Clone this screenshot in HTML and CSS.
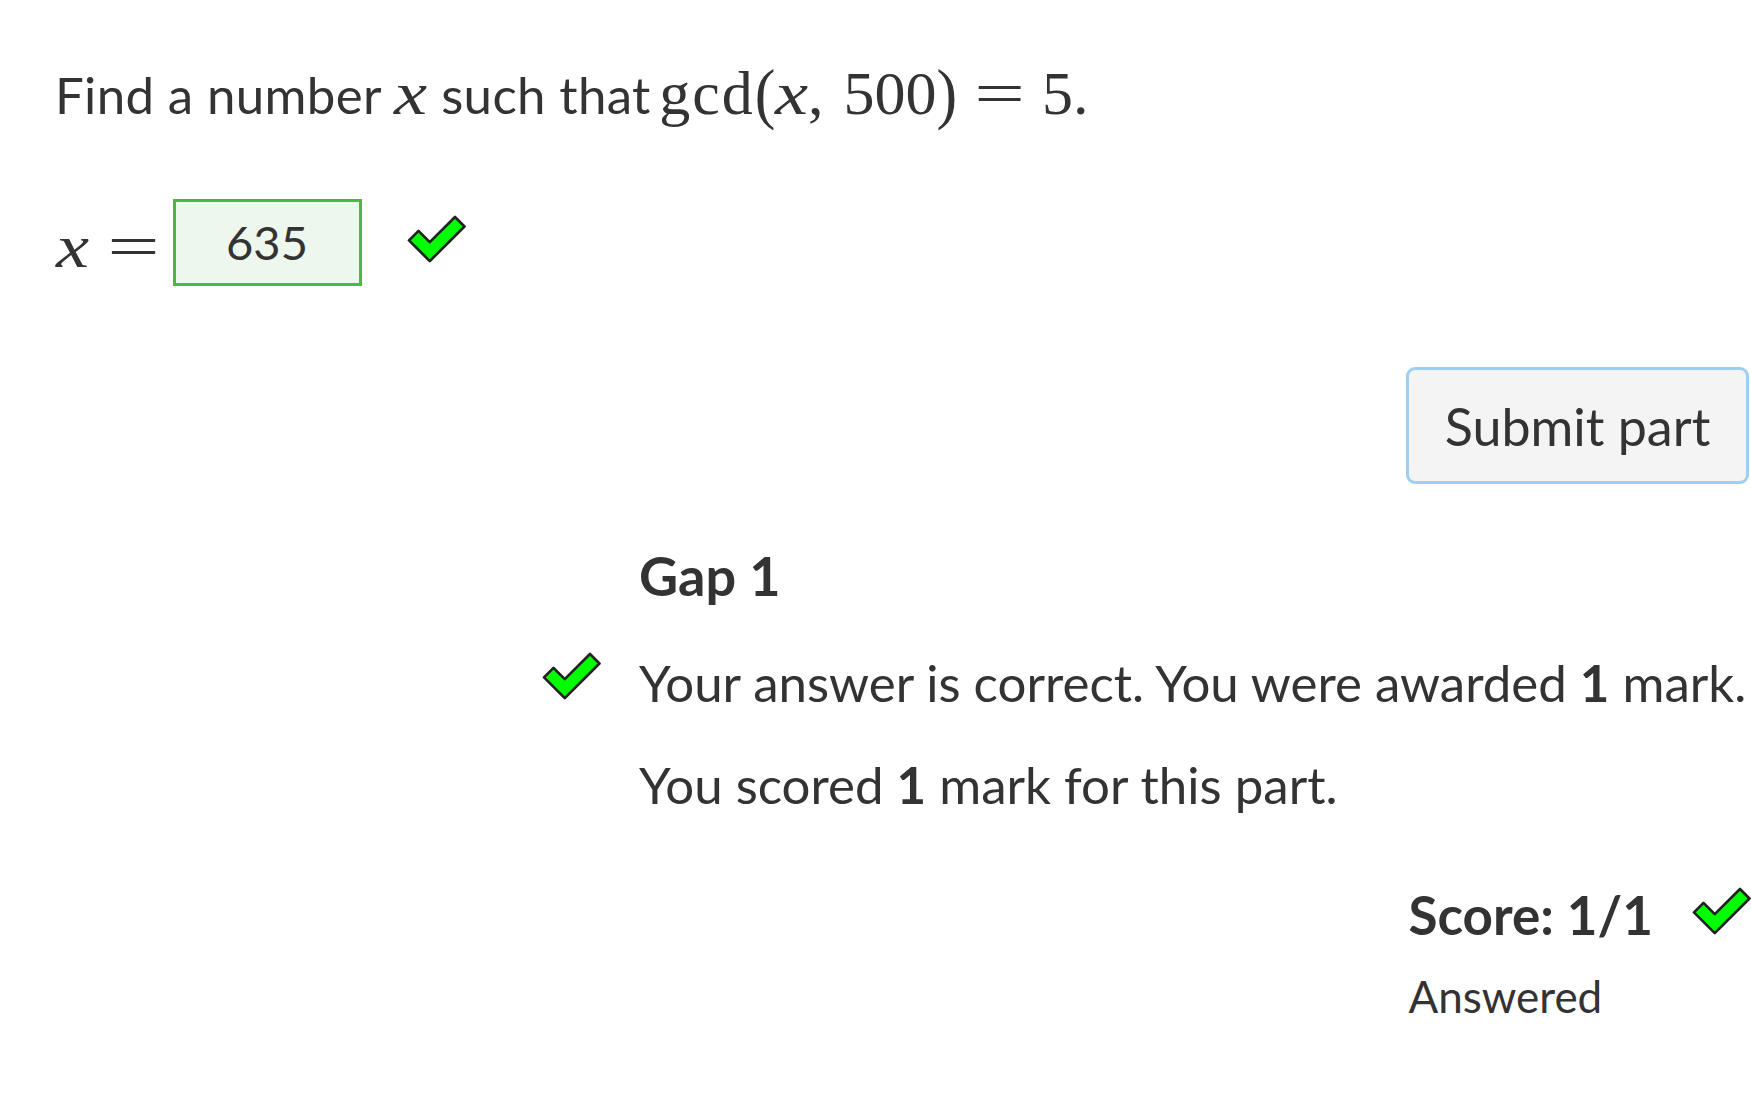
FILE: index.html
```html
<!DOCTYPE html>
<html lang="en">
<head>
<meta charset="utf-8">
<title>Question</title>
<link rel="stylesheet" href="styles.css">
</head>
<body>
<div class="page">
  <p class="prompt">Find a number <span class="math"><span class="mi">x</span></span> such that <span class="math expr"><span class="mo">gcd</span><span class="paren">(</span><span class="mi">x</span><span class="punct">,</span><span class="thin"></span>500<span class="paren">)</span><span class="rel">=</span>5.</span></p>

  <div class="answer-row">
    <span class="math lhs"><span class="mi">x</span><span class="rel">=</span></span>
    <span class="answer">635</span>
    <svg class="tick tick-input" viewBox="0 0 58 45" aria-hidden="true"><polygon points="11.1,14.4 22,25.31 46.4,0.9 55.6,10.1 22,43.69 1.9,23.6"/></svg>
  </div>

  <div class="submit-row">
    <button class="submit" type="button">Submit part</button>
  </div>

  <section class="feedback">
    <h4 class="gap-title">Gap 1</h4>
    <svg class="tick tick-fb" viewBox="0 0 58 45" aria-hidden="true"><polygon points="11.1,14.4 22,25.31 46.4,0.9 55.6,10.1 22,43.69 1.9,23.6"/></svg>
    <p class="fb-text">Your answer is correct. You were awarded <strong>1</strong> mark.</p>
    <p class="fb-text fb-score">You scored <strong>1</strong> mark for this part.</p>
  </section>

  <div class="score-row">
    <div class="score">
      <div class="score-line"><strong>Score: 1/1</strong><svg class="tick" viewBox="0 0 58 45" aria-hidden="true"><polygon points="11.1,14.4 22,25.31 46.4,0.9 55.6,10.1 22,43.69 1.9,23.6"/></svg></div>
      <div class="answered">Answered</div>
    </div>
  </div>
</div>
</body>
</html>
```

FILE: styles.css
```css
html, body {
  margin: 0;
  padding: 0;
  background: #ffffff;
}

body {
  font-family: Lato, "Open Sans", sans-serif;
  color: #333333;
  font-size: 51px;
  line-height: 1.2;
  overflow: hidden;
}

.page {
  padding: 62px 2px 0 55px;
  width: 1751px;
  box-sizing: border-box;
}

.prompt {
  margin: 0;
  white-space: nowrap;
  letter-spacing: 0.35px;
}

.math {
  font-family: "Liberation Serif", "DejaVu Serif", serif;
  font-size: 62px;
  line-height: 1;
  letter-spacing: 0;
}

.expr {
  margin-left: -5px;
}

.mi {
  display: inline-block;
  font-style: italic;
  transform-origin: left center;
  transform: scaleX(1.2);
  margin-right: 6px;
}

.paren {
  display: inline-block;
  transform: scaleY(1.08);
}

.mo {
  letter-spacing: 2px;
}

.punct {
  margin-left: -1px;
}

.thin {
  display: inline-block;
  width: 20px;
}

.rel {
  display: inline-block;
  margin: 0 25px;
  transform: scaleX(1.45);
}

/* answer row */
.answer-row {
  margin-top: 74px;
  display: flex;
  align-items: center;
  height: 87px;
  margin-left: 1px;
}

.lhs {
  display: inline-flex;
  align-items: baseline;
  margin-top: 6px;
}

.lhs .mi {
  margin-right: 5px;
}

.lhs .rel {
  margin: 0 22px 0 27px;
  transform: scaleX(1.5);
}

.answer {
  box-sizing: border-box;
  width: 189px;
  height: 87px;
  border: 3px solid #44bb44;
  background: #edf7ed;
  display: flex;
  align-items: center;
  justify-content: center;
  font-size: 47px;
}

.tick {
  width: 60px;
  height: 46.5px;
  flex: none;
  overflow: visible;
}

.tick polygon {
  fill: #00ff00;
  stroke: #222222;
  stroke-width: 2.6;
  stroke-linejoin: round;
}

.tick-input {
  margin-left: 45px;
  margin-top: -6px;
}

/* submit */
.submit-row {
  margin-top: 81px;
  display: flex;
  justify-content: flex-end;
}

.submit {
  box-sizing: border-box;
  width: 343px;
  height: 117px;
  border: 3px solid #9ecff0;
  border-radius: 9px;
  background: #f4f4f4;
  color: #333333;
  font-family: Lato, "Open Sans", sans-serif;
  font-size: 52px;
  padding: 0;
}

/* feedback */
.feedback {
  margin-top: 60px;
  margin-left: 487px;
  display: grid;
  grid-template-columns: 60px 1fr;
  column-gap: 37px;
}

.gap-title {
  grid-column: 2;
  margin: 0;
  font-size: 54px;
  font-weight: 700;
}

.tick-fb {
  grid-column: 1;
  grid-row: 2;
  margin-top: 44px;
}

.fb-text {
  grid-column: 2;
  margin: 43px 0 0;
  white-space: nowrap;
}

.fb-score {
  margin-top: 41px;
}

.fb-text strong {
  font-weight: 700;
}

/* score */
.score-row {
  margin-top: 68px;
  display: flex;
  justify-content: flex-end;
}

.score {
  margin-right: -3px;
}

.score-line {
  display: flex;
  align-items: center;
  gap: 39px;
  font-size: 53px;
}

.score-line strong {
  font-weight: 700;
}

.score-line .tick {
  margin-top: -8px;
}

.answered {
  margin-top: 23px;
  font-size: 44px;
}
```
